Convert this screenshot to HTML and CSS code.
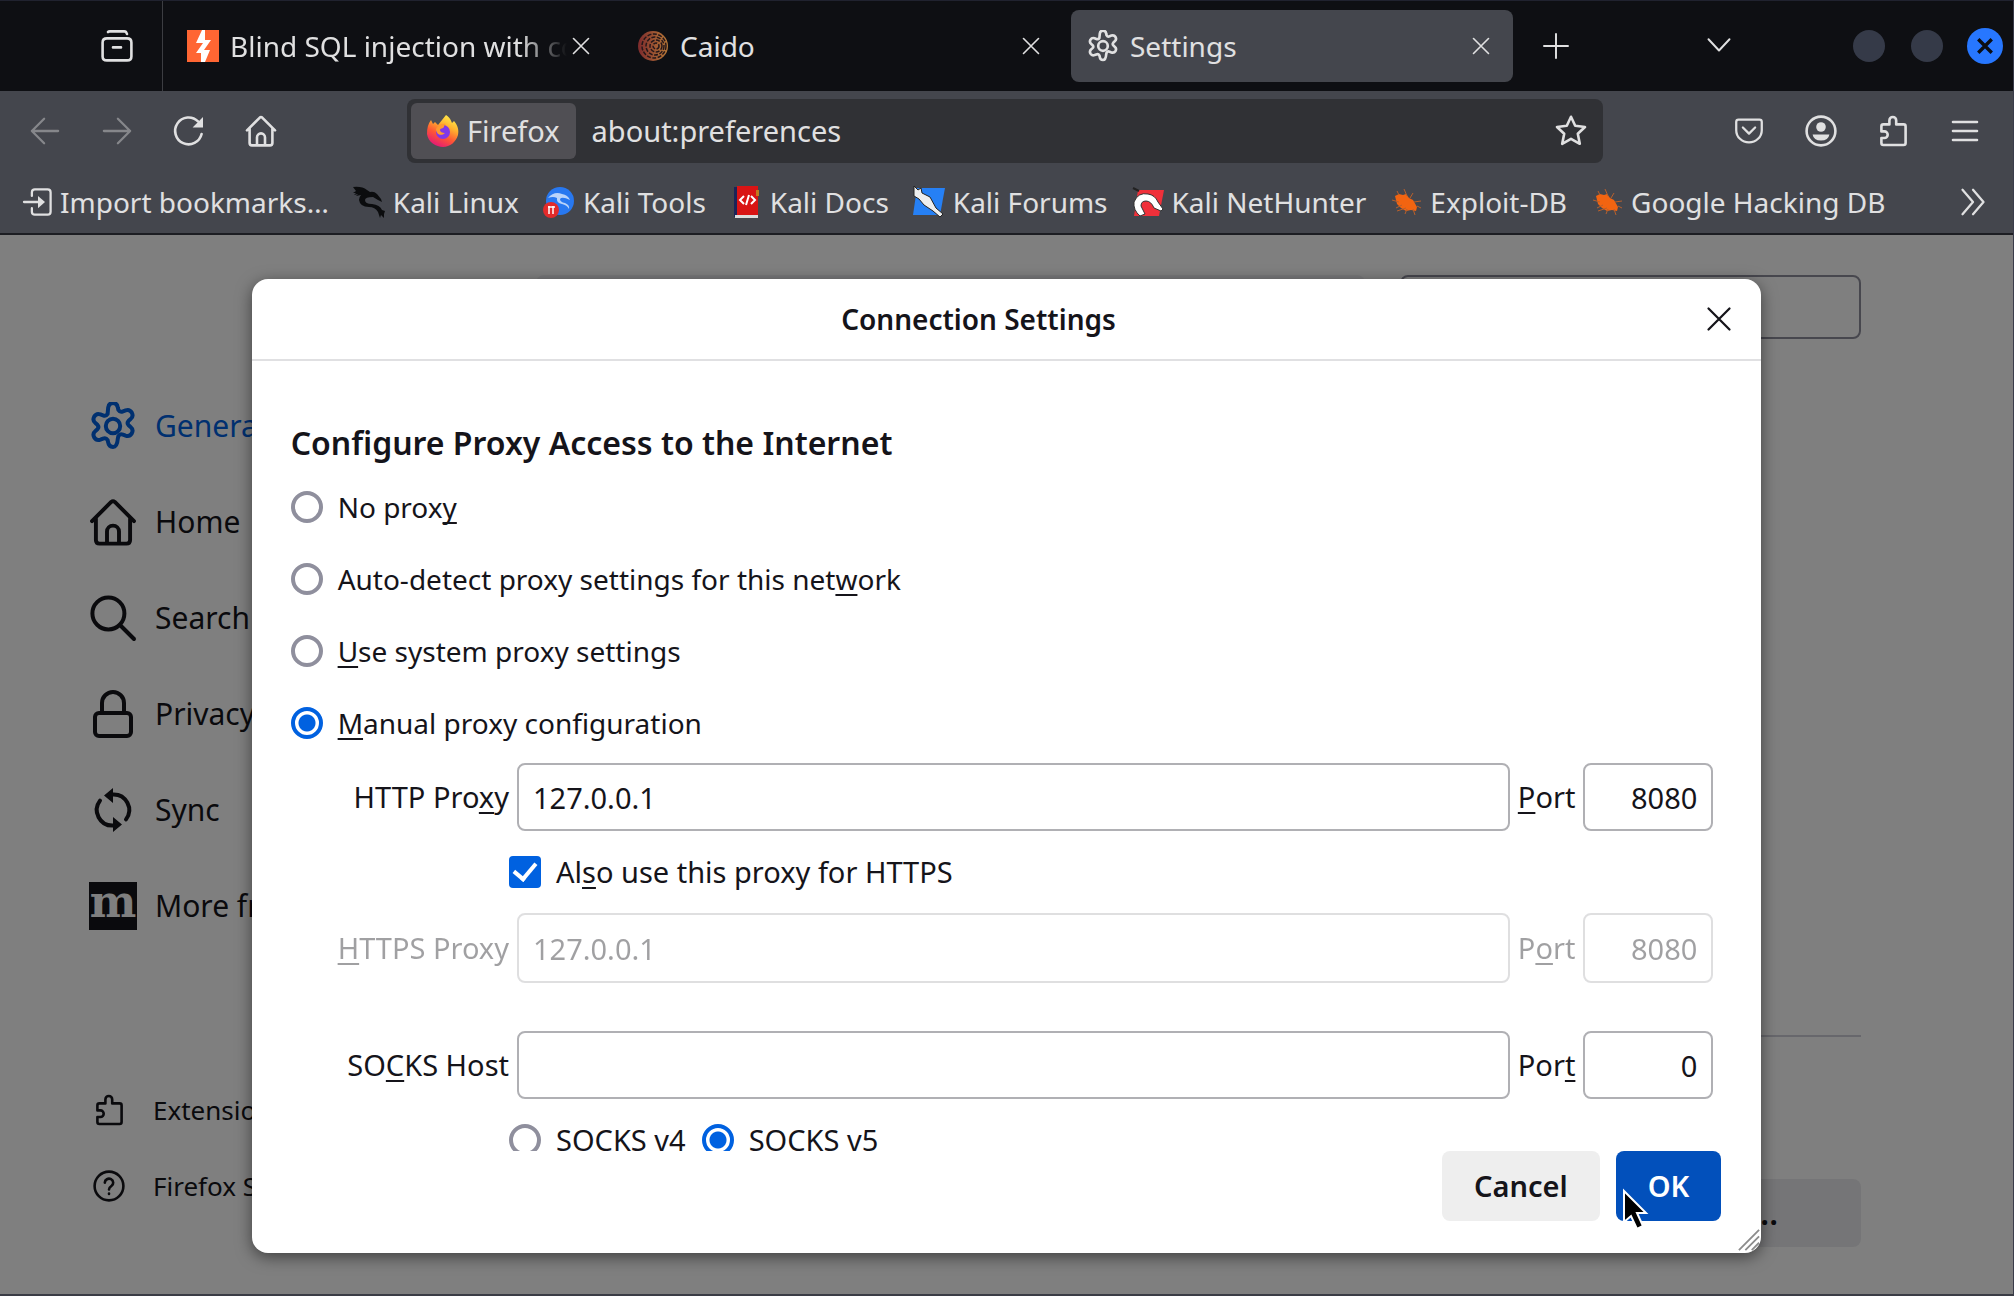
FILE: index.html
```html
<!DOCTYPE html>
<html lang="en">
<head>
<meta charset="utf-8">
<title>Settings</title>
<link rel="stylesheet" href="styles.css">
</head>
<body>
<svg class="defs" aria-hidden="true">
  <symbol id="i-close" viewBox="0 0 16 16"><path d="M2 2l12 12M14 2L2 14"/></symbol>
  <symbol id="i-gear" viewBox="0 0 24 24"><circle cx="12" cy="12" r="3.600"/><path d="M9.600 3.200Q9.900 1 12 1t2.400 2.200l.3 1.300q.8 1.300 2.300.7l1.300-.5q2-.7 3.100 1.100 1 1.900-.6 3.200l-1 .9q-1 1.100 0 2.200l1 .9q1.600 1.300.6 3.200-1.100 1.800-3.100 1.100l-1.300-.5q-1.500-.6-2.300.7l-.3 1.300Q14.100 23 12 23t-2.400-2.200l-.3-1.300q-.8-1.300-2.300-.7l-1.300.5q-2 .7-3.100-1.100-1-1.900.6-3.200l1-.9q1-1.100 0-2.200l-1-.9Q1.600 9.700 2.600 7.800 3.700 6 5.700 6.700l1.300.5q1.500.6 2.300-.7z" transform="translate(0 -.5)"/></symbol>
  <symbol id="i-home" viewBox="0 0 16 16"><path d="M1 7.700L7.400 1.300q.6-.5 1.200 0L15 7.700M2.300 6.700V14q0 1.200 1.200 1.200h9q1.200 0 1.200-1.200V6.700M6 15v-3.800a2 2 0 0 1 4 0V15"/></symbol>
  <symbol id="i-puzzle" viewBox="0 0 16 16"><path d="M2.200 8.200V5.700q0-1 1-1h3v-2a1.600 1.600 0 0 1 3.400 0v2h3.700q1 0 1 1V14q0 1-1 1H3.200q-1 0-1-1v-2.500h1.500a1.600 1.600 0 0 0 0-3.300z"/></symbol>
  <symbol id="i-bug" viewBox="0 0 32 32"><path d="M5 10l4-2 4 1 3-1 3 4 4 2 4 7-1 4-5-1-5 1-5-3-4-4z" fill="#f26411"/><path d="M9 9L7 5M17 10l-3-7M20 12l3-5M24 16l7-1M27 20l4 2M23 23l2 6M17 23l-2 5M12 19l-6 3M9 16l-7-2M16 22l-9 3" fill="none" stroke="#b8602c" stroke-width="1"/></symbol>
</svg>

<header class="tabbar">
  <button class="iconbtn view-btn" aria-label="Recent browsing"><svg class="ic32" viewBox="0 0 16 16"><path d="M3.500 1q.3-.3.900-.3h7.200q.6 0 .9.300l.5 1M3 4.200h10q2.200 0 2.200 2v7q0 2-2.200 2H3q-2.200 0-2.200-2v-7q0-2 2.200-2zM6 8.700h4"/></svg></button>
  <div class="tabs">
    <div class="tab">
      <svg class="fill32" viewBox="0 0 32 32"><rect width="32" height="32" fill="#ff6633"/><path d="M15 0h3v10h6l-7 10h6l-5 12h-4v-9H9l7-10H9z" fill="#fff"/></svg>
      <span class="tab-title fade">Blind SQL injection with conditional errors</span>
      <button class="tab-close" aria-label="Close tab"><svg class="ic20"><use href="#i-close"/></svg></button>
    </div>
    <div class="tab">
      <svg class="fill32" viewBox="0 0 32 32"><defs><linearGradient id="ca"><stop offset="0" stop-color="#7c2a2c"/><stop offset="1" stop-color="#b97a38"/></linearGradient></defs><circle cx="16" cy="16" r="15" fill="url(#ca)"/><g fill="none" stroke="#24171a" stroke-width="1.500" stroke-dasharray="4 1.500"><circle cx="19" cy="16" r="3"/><circle cx="19" cy="16" r="6"/><circle cx="18" cy="16" r="9"/><circle cx="17" cy="16" r="12"/></g></svg>
      <span class="tab-title">Caido</span>
      <button class="tab-close" aria-label="Close tab"><svg class="ic20"><use href="#i-close"/></svg></button>
    </div>
    <div class="tab selected">
      <svg class="ic32 heavy"><use href="#i-gear"/></svg>
      <span class="tab-title">Settings</span>
      <button class="tab-close" aria-label="Close tab"><svg class="ic20"><use href="#i-close"/></svg></button>
    </div>
  </div>
  <button class="iconbtn new-tab" aria-label="New tab"><svg class="ic24" viewBox="0 0 16 16"><path d="M8 0v16M0 8h16"/></svg></button>
  <button class="iconbtn list-tabs" aria-label="List all tabs"><svg class="ic24" viewBox="0 0 16 16"><path d="M1 3.500l7 7.500 7-7.500"/></svg></button>
  <div class="wincontrols">
    <button class="dot" aria-label="Minimize"></button>
    <button class="dot" aria-label="Maximize"></button>
    <button class="dot quit" aria-label="Close window"><svg viewBox="0 0 16 16"><path d="M2 2l12 12M14 2L2 14"/></svg></button>
  </div>
</header>

<nav class="navbar" aria-label="Navigation">
  <div class="navgroup">
    <button class="iconbtn off" aria-label="Back"><svg class="ic28" viewBox="0 0 16 16"><path d="M15.500 8H.5M7.500 1L.5 8l7 7"/></svg></button>
    <button class="iconbtn off" aria-label="Forward"><svg class="ic28" viewBox="0 0 16 16"><path d="M.5 8h15M8.500 1l7 7-7 7"/></svg></button>
    <button class="iconbtn" aria-label="Reload"><svg class="ic32" viewBox="0 0 16 16"><path d="M14.300 9.500A6.700 6.700 0 1 1 12.500 3.200"/><path class="solid" d="M15 1v5.200h-5.200z"/></svg></button>
    <button class="iconbtn" aria-label="Home"><svg class="ic32"><use href="#i-home"/></svg></button>
  </div>
  <div class="urlbar">
    <span class="identity">
      <svg class="fill32" viewBox="0 0 32 32"><defs><linearGradient id="fx" x1=".8" y1="0" x2=".3" y2="1"><stop offset="0" stop-color="#fff44f"/><stop offset=".35" stop-color="#ffb02e"/><stop offset=".65" stop-color="#ff5634"/><stop offset="1" stop-color="#e3157a"/></linearGradient></defs><path d="M19 0c4 3 5 5 6 8l2-2c4 5 5 9 4 14-2 7-8 12-15 12S1 27 0 19C0 13 1 9 4 5l2 4 2-2 3 3z" fill="url(#fx)"/><circle cx="16" cy="17" r="7" fill="#8038e8"/><path d="M9 14c2-4 6-6 10-5-2 1-2 2-2 3-1 2-4 1-4 3s2 3 5 3c-4 4-9 1-9-4z" fill="#ff9a2e"/></svg>
      Firefox</span>
    <input class="url" type="text" value="about:preferences" aria-label="Address">
    <button class="iconbtn star" aria-label="Bookmark this page"><svg class="ic32" viewBox="0 0 16 16"><path d="M8 .9l2.100 4.500 4.900.6-3.600 3.400 1 5-4.400-2.500-4.400 2.500 1-5L1 6l4.900-.6z"/></svg></button>
  </div>
  <div class="navgroup end">
    <button class="iconbtn" aria-label="Save to Pocket"><svg class="ic28" viewBox="0 0 16 16"><path d="M2 1.500h12q1.300 0 1.300 1.300v4.700a7.300 7 0 0 1-14.600 0V2.800Q.7 1.500 2 1.500zM4.500 6L8 9.500 11.500 6"/></svg></button>
    <button class="iconbtn" aria-label="Account"><svg class="ic32" viewBox="0 0 16 16"><circle cx="8" cy="8" r="7.200"/><circle class="solid" cx="8" cy="6" r="2.400"/><path class="solid" d="M3.800 9.700h8.400q-.5 3-4.200 3t-4.200-3z"/></svg></button>
    <button class="iconbtn" aria-label="Extensions"><svg class="ic32"><use href="#i-puzzle"/></svg></button>
    <button class="iconbtn" aria-label="Menu"><svg class="ic24" viewBox="0 0 12 12"><path d="M0 1.500h12M0 6h12M0 10.500h12"/></svg></button>
  </div>
</nav>

<nav class="bookmarks" aria-label="Bookmarks">
  <a href="#"><svg class="ic28" viewBox="0 0 16 16"><path d="M4.500 4.500V2.500Q4.500.8 6.200.8h7.300q1.700 0 1.700 1.700v11q0 1.700-1.700 1.700H6.200q-1.700 0-1.700-1.700v-2M0 8h9"/><path class="solid" d="M8 4.500L12 8l-4 3.500z"/></svg>Import bookmarks…</a>
  <a href="#"><svg class="fill32" viewBox="0 0 32 32"><path d="M0 1q9-1 14 3l3 2q4-1 7 2l4 5 1 3-4-2-5-3q-8 0-8 3 0 4 7 4 8 1 10 6l3 1-1 3v4l-3-3-1 3-2-6q-3-5-9-5-9 0-10-7 0-3 2-5l-5 1 2-2-4 1 2-2-3 0 3-2z" fill="#0b0c0e"/></svg>Kali Linux</a>
  <a href="#"><svg class="fill32" viewBox="0 0 32 32"><circle cx="17" cy="15" r="14" fill="#2878f0"/><path d="M5 12q6-7 14-4 6 1 8 6-8-4-10-1 0 3 5 4 5 2 4 6-2-4-7-5-6-1-5-6-4-2-9 0z" fill="#b9d3fa"/><circle cx="8" cy="24" r="8" fill="#e32b2b"/><path d="M6 20v8M10 20v8M5 21h3M8 21h4" stroke="#fff" stroke-width="1.500"/></svg>Kali Tools</a>
  <a href="#"><svg class="fill32" viewBox="0 0 32 32"><path d="M4 1h3v30H4z" fill="#1c2458"/><path d="M7 0h21v29H7z" fill="#d91414"/><path d="M26 4h3v6h-3z" fill="#c07a20"/><path d="M5 29h23v3H5z" fill="#ddd"/><path d="M14 10l-4 4 4 4M21 10l4 4-4 4M19 9l-3 10" fill="none" stroke="#fff" stroke-width="2"/></svg>Kali Docs</a>
  <a href="#"><svg class="fill32" viewBox="0 0 32 32"><path d="M4 2h28l-5 27H0z" fill="#2680f5"/><path d="M1 0l4 4 3-2 1 5 8 4 6 11 7 6-3 3-7-6-9-6-5-6-5-3z" fill="#eee" stroke="#222"/></svg>Kali Forums</a>
  <a href="#"><svg class="fill32" viewBox="0 0 32 32"><path d="M6 4h26l-5 26H2z" fill="#f0303a"/><path d="M2 16q4-10 14-8 7 1 10 8l5 7-2 2-7-3q-3-7-8-7t-5 5l4 8-5 2q-7-6-6-14z" fill="#fff" stroke="#333"/><path d="M1 2l6 3" stroke="#222" stroke-width="2"/></svg>Kali NetHunter</a>
  <a href="#"><svg class="fill32"><use href="#i-bug"/></svg>Exploit-DB</a>
  <a href="#"><svg class="fill32"><use href="#i-bug"/></svg>Google Hacking DB</a>
  <button class="iconbtn more" aria-label="More bookmarks"><svg class="ic28" viewBox="0 0 14 16"><path d="M1 1l6 7-6 7M7 1l6 7-6 7"/></svg></button>
</nav>

<div class="page">
  <div class="prefs">
    <nav class="categories" aria-label="Categories">
      <a href="#" class="current"><svg class="ic48"><use href="#i-gear"/></svg>General</a>
      <a href="#"><svg class="ic48 thin"><use href="#i-home"/></svg>Home</a>
      <a href="#"><svg class="ic48" viewBox="0 0 24 24"><circle cx="9.700" cy="9.700" r="8"/><path d="M15.500 15.500l7 7"/></svg>Search</a>
      <a href="#"><svg class="ic48" viewBox="0 0 24 24"><rect x="3" y="11.500" width="18" height="11.500" rx="2"/><path d="M6.500 11.500V6.500a5.500 5.500 0 0 1 11 0v5"/></svg>Privacy &amp; Security</a>
      <a href="#"><svg class="ic48" viewBox="0 0 24 24"><path d="M12 4.200a7.800 7.800 0 0 1 6.500 12.500M12 19.800A7.800 7.800 0 0 1 5.500 7.300"/><path class="solid" d="M12 1v7.500L7.500 4.700zM12 15.500V23l4.500-3.800z"/></svg>Sync</a>
      <a href="#"><span class="moz">m</span>More from Mozilla</a>
      <div class="support">
        <a href="#"><svg class="ic32"><use href="#i-puzzle"/></svg>Extensions &amp; Themes</a>
        <a href="#"><svg class="ic32" viewBox="0 0 16 16"><circle cx="8" cy="8" r="7.200"/><path d="M5.900 6.300a2.100 2 0 1 1 3.300 1.700q-1.200.8-1.200 1.700M8 11.800v.2"/></svg>Firefox Support</a>
      </div>
    </nav>
    <main class="content">
      <div class="toprow"><div class="notice"></div><input class="find" type="search" aria-label="Find in Settings"></div>
      <div class="lower"><button class="settings-btn">Settings...</button></div>
    </main>
  </div>

  <div class="overlay">
    <section class="dialog" role="dialog" aria-labelledby="dlg-title">
      <header class="dlg-head">
        <h1 id="dlg-title">Connection Settings</h1>
        <button class="dlg-close" aria-label="Close"><svg class="ic28"><use href="#i-close"/></svg></button>
      </header>
      <form class="dlg-body">
        <h2>Configure Proxy Access to the Internet</h2>
        <label class="choice"><input type="radio" name="mode"><span>No prox<u>y</u></span></label>
        <label class="choice"><input type="radio" name="mode"><span>Auto-detect proxy settings for this net<u>w</u>ork</span></label>
        <label class="choice"><input type="radio" name="mode"><span><u>U</u>se system proxy settings</span></label>
        <label class="choice"><input type="radio" name="mode" checked><span><u>M</u>anual proxy configuration</span></label>
        <div class="grid">
          <label for="http">HTTP Pro<u>x</u>y</label><input class="field" id="http" type="text" value="127.0.0.1">
          <label for="http-port"><u>P</u>ort</label><input class="field port" id="http-port" type="text" value="8080">
          <div class="under"><label class="choice"><input type="checkbox" checked><span>Al<u>s</u>o use this proxy for HTTPS</span></label></div>
          <label class="dim" for="https"><u>H</u>TTPS Proxy</label><input class="field" id="https" type="text" value="127.0.0.1" disabled>
          <label class="dim" for="https-port">P<u>o</u>rt</label><input class="field port" id="https-port" type="text" value="8080" disabled>
          <div class="space"></div>
          <label for="socks">SO<u>C</u>KS Host</label><input class="field" id="socks" type="text">
          <label for="socks-port">Por<u>t</u></label><input class="field port" id="socks-port" type="text" value="0">
          <div class="under"><label class="choice"><input type="radio" name="socks"><span>SOCKS v4</span></label><label class="choice"><input type="radio" name="socks" checked><span>SOCKS v5</span></label></div>
        </div>
      </form>
      <footer class="dlg-foot">
        <button class="btn">Cancel</button>
        <button class="btn primary">OK</button>
      </footer>
      <svg class="grip" viewBox="0 0 24 24"><path d="M1 23L23 1M8 23L23 8M15 23l8-8"/></svg>
      <svg class="cursor" viewBox="0 0 26 42"><path d="M2 2v31l7-6 6 13 6-3-6-13h9z"/></svg>
    </section>
  </div>
</div>
</body>
</html>
```
FILE: styles.css
```css
* { box-sizing: border-box; }
body {
  margin: 0;
  height: 100vh;
  display: flex;
  flex-direction: column;
  overflow: hidden;
  font: 28px/40px "Noto Sans", sans-serif;
  color: #e0e0e1;
  background: #44464d;
  border-top: 1px solid #20222f;
  border-right: 1px solid #3a3c4a;
  border-bottom: 2px solid #3a3c45;
}
button, input { font: inherit; color: inherit; margin: 0; }
button { border: 0; padding: 0; background: none; }
a { color: inherit; text-decoration: none; }
svg { display: block; flex: none; overflow: visible; }
.defs { position: absolute; width: 0; height: 0; }

/* Icons */
.ic20, .ic24, .ic28, .ic32, .ic48 {
  fill: none;
  stroke: currentColor;
  stroke-width: 1.3;
  stroke-linecap: round;
  stroke-linejoin: round;
}
.ic20 { width: 20px; height: 20px; }
.ic24 { width: 24px; height: 24px; }
.ic28 { width: 28px; height: 28px; }
.ic32, .fill32 { width: 32px; height: 32px; }
.ic48 { width: 48px; height: 48px; stroke-width: 2; }
.thin { stroke-width: 1.3; }
.heavy { stroke-width: 2; }
.solid { fill: currentColor; stroke: none; }
.iconbtn {
  width: 72px;
  height: 64px;
  display: flex;
  align-items: center;
  justify-content: center;
}
.off { color: #86878b; }

/* Tab strip */
.tabbar { display: flex; align-items: center; height: 90px; background: #0e0f13; flex: none; }
.view-btn { margin-left: 81px; }
.tabs { display: flex; gap: 8px; align-self: stretch; align-items: center; margin-left: 9px; padding-left: 8px; border-left: 1px solid #3c3d42; }
.tab {
  width: 442px;
  height: 72px;
  padding: 0 22px 0 16px;
  display: flex;
  align-items: center;
  border-radius: 8px;
}
.selected { background: #44464d; }
.tab-title { flex: 1; margin: 0 4px 0 11px; white-space: nowrap; overflow: hidden; }
.fade { mask-image: linear-gradient(to right, #000 86%, transparent); }
.new-tab { margin-left: 7px; }
.list-tabs { margin-left: auto; }
.wincontrols { display: flex; align-items: center; gap: 26px; margin: 0 10px 0 98px; }
.dot { width: 32px; height: 32px; border-radius: 50%; background: #353a48; }
.quit { width: 36px; height: 36px; margin-left: -2px; background: #2777ff; display: grid; place-items: center; }
.quit svg { width: 18px; height: 18px; fill: none; stroke: #0b0d12; stroke-width: 3; }

/* Navigation toolbar */
.navbar { display: flex; align-items: center; height: 80px; flex: none; padding: 0 12px 0 9px; font-size: 29px; }
.navgroup { display: flex; }
.urlbar {
  flex: 1;
  display: flex;
  align-items: center;
  height: 64px;
  margin: 0 110px;
  padding: 4px;
  border-radius: 8px;
  background: #303135;
}
.identity { display: flex; align-items: center; gap: 8px; height: 56px; padding: 0 16px; border-radius: 6px; background: #504f54; }
.url { flex: 1; min-width: 0; border: 0; background: none; padding: 0 16px; }
.star { width: 56px; }

/* Bookmarks toolbar */
.bookmarks { display: flex; align-items: center; gap: 24px; height: 64px; flex: none; padding: 0 4px 0 24px; border-bottom: 2px solid #1c1d22; white-space: nowrap; }
.bookmarks a { display: flex; align-items: center; gap: 8px; }
.more { margin-left: auto; }

/* Settings page behind the dialog */
.page { position: relative; flex: 1; min-height: 0; display: flex; background: #fff; color: #15141a; overflow: hidden; }
.prefs { flex: 1; display: flex; padding: 40px 152px 0 89px; }
.categories { width: 447px; flex: none; padding-top: 103px; font-size: 30px; }
.categories a { display: flex; align-items: center; gap: 18px; height: 96px; white-space: nowrap; }
.categories .current { color: #0061e0; }
.moz { width: 48px; height: 48px; background: #15141a; color: #fff; font: bold 44px/40px "DejaVu Serif", serif; text-align: center; }
.support { padding: 118px 0 0 4px; font-size: 26px; }
.support a { height: 76px; gap: 28px; }
.content { flex: 1; display: flex; flex-direction: column; }
.toprow { display: flex; gap: 35px; }
.notice { flex: 1; height: 64px; background: #f0f0f4; border-radius: 8px; }
.find { width: 461px; height: 64px; border: 2px solid #8f8f9d; border-radius: 8px; background: none; }
.lower { margin-top: 696px; border-top: 2px solid #cfcfd8; padding-top: 142px; display: flex; justify-content: flex-end; }
.settings-btn { width: 320px; height: 68px; border-radius: 8px; background: #ebebee; font-size: 32px; font-weight: 600; }

/* Connection dialog */
.overlay {
  position: absolute;
  inset: 0;
  display: flex;
  justify-content: center;
  padding: 44px 0 41px;
  background: rgba(0, 0, 0, .5);
}
.dialog {
  position: relative;
  width: 75%;
  display: flex;
  flex-direction: column;
  background: #fff;
  border-radius: 16px;
  box-shadow: 0 4px 16px rgba(0, 0, 0, .5);
}
.dlg-head { display: flex; align-items: center; height: 82px; flex: none; padding: 0 28px 0 0; border-bottom: 2px solid #e0e0e2; }
h1, h2 { margin: 0; font-weight: 600; }
h1 { flex: 1; font-size: 28px; text-align: center; }
.dlg-close { display: grid; place-items: center; }
.dlg-body { flex: 1; min-height: 0; overflow: hidden; padding: 60px 48px 0 39px; }
h2 { font-size: 32px; line-height: 44px; margin-bottom: 6px; }
.choice { display: flex; align-items: center; gap: 15px; height: 72px; }
.choice input { appearance: none; flex: none; width: 32px; height: 32px; border: 4px solid #8f8f9d; border-radius: 50%; background: #fff; }
.choice input[type=radio]:checked { border-color: #0061e0; background: radial-gradient(circle, #0061e0 8px, #fff 9px); }
.choice input[type=checkbox] {
  border: 0;
  border-radius: 4px;
  background: #0061e0;
  display: grid;
  place-items: center;
}
.choice input[type=checkbox]::before { content: ""; width: 10px; height: 18px; margin-top: -6px; border: solid #fff; border-width: 0 4px 4px 0; transform: rotate(40deg); }
u { text-decoration-thickness: 2px; text-underline-offset: 4px; text-decoration-skip-ink: none; }
.grid { display: grid; grid-template-columns: auto 1fr auto 130px; align-items: center; column-gap: 8px; padding: 4px 0 0 47px; font-size: 29px; }
.grid > label { text-align: right; white-space: nowrap; }
.field { width: 100%; min-width: 0; height: 68px; border: 2px solid #b0b0b4; border-radius: 8px; padding: 0 14px; background: #fff; }
.port { text-align: right; }
.dim { opacity: .4; }
.field:disabled { height: 70px; opacity: .4; }
.under { grid-column: 2 / -1; display: flex; gap: 16px; margin-left: -8px; height: 82px; align-items: center; }
.space { grid-column: 1 / -1; height: 48px; }
.dlg-foot { display: flex; justify-content: flex-end; gap: 16px; flex: none; padding: 0 40px 32px; }
.btn { height: 70px; padding: 0 32px; border-radius: 8px; background: #eee; font-size: 29px; font-weight: 600; }
.primary { background: #0250bb; color: #fff; }
.grip { position: absolute; right: 1px; bottom: 2px; width: 22px; height: 22px; fill: none; stroke: #8c8c8c; stroke-width: 2; }
.cursor { position: absolute; right: 113px; bottom: 22px; width: 26px; height: 42px; fill: #000; stroke: #fff; stroke-width: 2; }
```
